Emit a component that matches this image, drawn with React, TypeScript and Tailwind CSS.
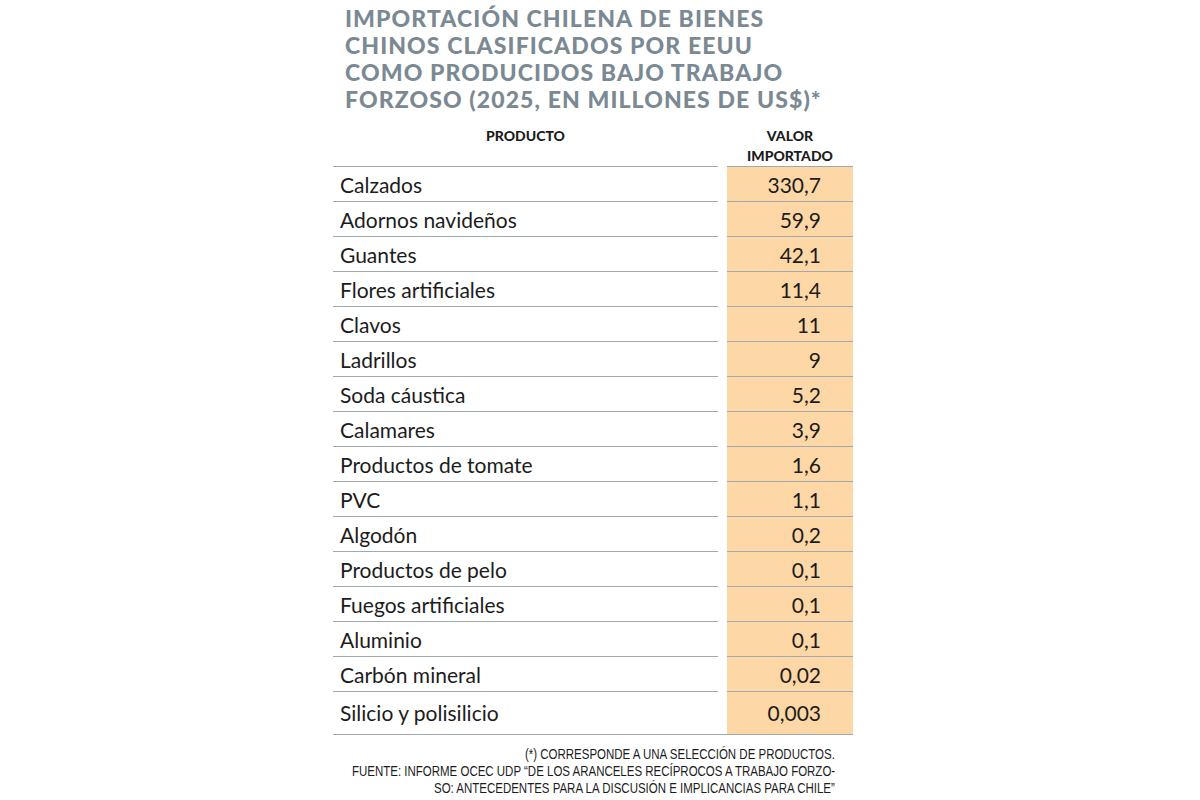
const rows: [string, string][] = [
  ['Calzados', '330,7'],
  ['Adornos navideños', '59,9'],
  ['Guantes', '42,1'],
  ['Flores artificiales', '11,4'],
  ['Clavos', '11'],
  ['Ladrillos', '9'],
  ['Soda cáustica', '5,2'],
  ['Calamares', '3,9'],
  ['Productos de tomate', '1,6'],
  ['PVC', '1,1'],
  ['Algodón', '0,2'],
  ['Productos de pelo', '0,1'],
  ['Fuegos artificiales', '0,1'],
  ['Aluminio', '0,1'],
  ['Carbón mineral', '0,02'],
];

const notes = [
  '(*) Corresponde a una selección de productos.',
  'Fuente: Informe OCEC UDP “De los aranceles recíprocos a trabajo forzo-',
  'so: antecedentes para la discusión e implicancias para Chile”',
];

export default function App() {
  return (
    <div className="w-[1200px] h-[800px] bg-white overflow-hidden font-['Lato',sans-serif] text-[#1c1c1c]">
      <div className="ml-[333px] w-[520px]">
        <h1 className="pl-3 pt-[5px] text-[23px] leading-[27px] font-black uppercase text-[#7b8993] tracking-[1.1px] whitespace-nowrap">
          Importación chilena de bienes
          <br />
          chinos clasificados por EEUU
          <br />
          como producidos bajo trabajo
          <br />
          forzoso (2025, en millones de US$)*
        </h1>

        <div className="grid grid-cols-[385px_126px] gap-x-[9px] mt-[7px]">
          <div className="h-[47px] border-b border-[#a0a8b0] text-center text-[14px] font-black leading-[20px] pt-[6px]">
            PRODUCTO
          </div>
          <div className="h-[47px] border-b border-[#a0a8b0] text-center text-[14px] font-black leading-[20px] pt-[6px]">
            VALOR
            <br />
            IMPORTADO
          </div>

          {rows.map(([name, value]) => (
            <div key={name} className="contents">
              <div className="h-[35px] border-b border-[#a0a8b0] flex items-center pl-[7px] pt-[2px] text-[21px]">
                {name}
              </div>
              <div className="h-[35px] border-b border-[#a0a8b0] bg-[#fdd7a5] flex items-center justify-end pr-[32px] pt-[2px] text-[21px]">
                {value}
              </div>
            </div>
          ))}

          <div className="h-[42px] flex items-center pl-[7px] text-[21px]">Silicio y polisilicio</div>
          <div className="h-[42px] bg-[#fdd7a5] flex items-center justify-end pr-[32px] text-[21px]">0,003</div>
        </div>
        <div className="h-px bg-[#a0a8b0]" />

        <div className="mt-[11px] pr-[18px] flex flex-col items-end text-[14px] leading-[17px] uppercase font-['Liberation_Sans',Arial,sans-serif] text-[#1c1c1c]">
          {notes.map((line) => (
            <div key={line} className="whitespace-nowrap origin-right scale-x-[0.82]">
              {line}
            </div>
          ))}
        </div>
      </div>
    </div>
  );
}
